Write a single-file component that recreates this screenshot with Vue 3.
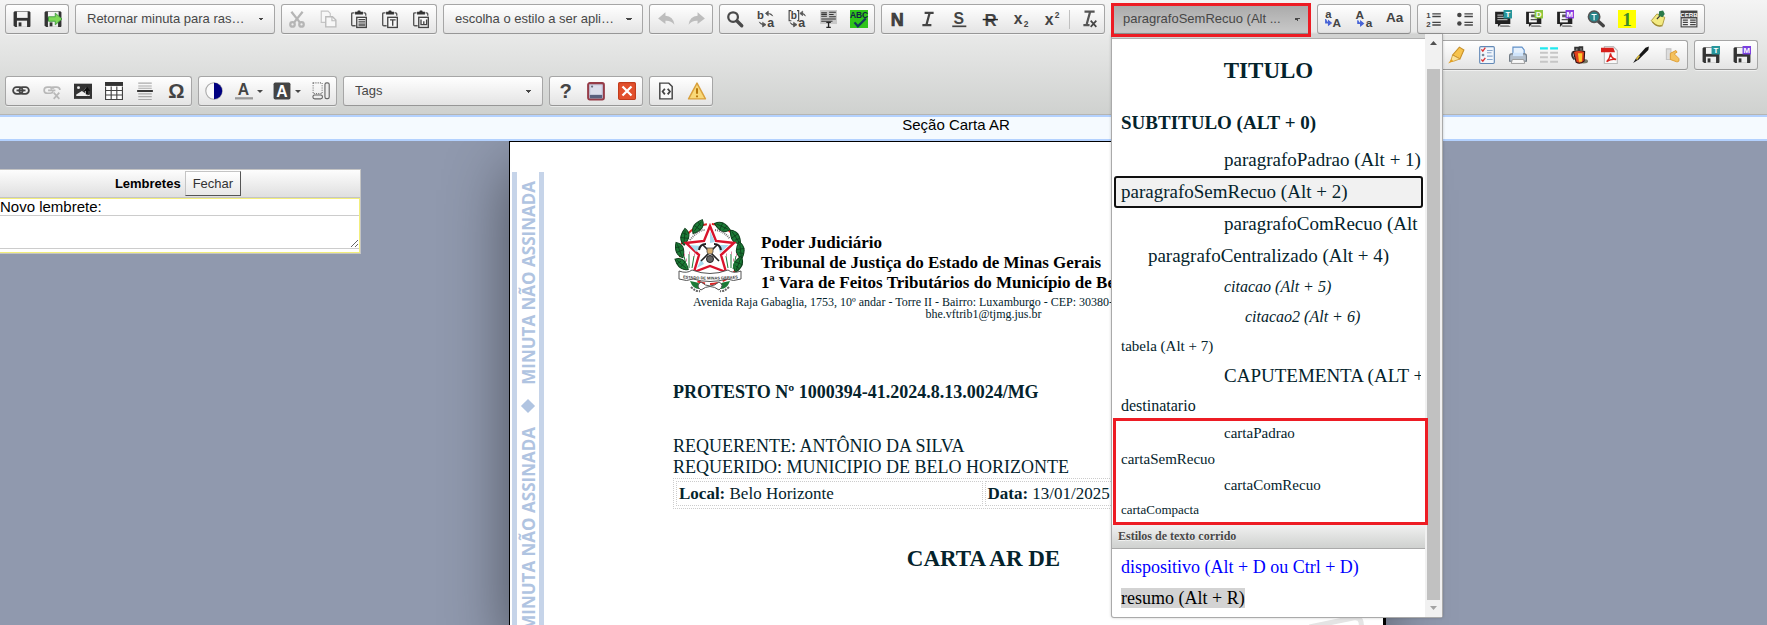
<script setup>
import { ref } from 'vue'

const dark = '#444'
const txt = (s, x, y, size, extra = '') =>
  `<text x="${x}" y="${y}" font-size="${size}" font-family="Liberation Sans, sans-serif" font-weight="bold" fill="${dark}" ${extra}>${s}</text>`
const disk = `<path d="M1.5 1h13l1 1v12.500l-.5.500h-13L.5 14V2z" fill="#333"/><rect x="3.500" y="1.500" width="9.500" height="5.500" fill="#f4f4f4"/><rect x="3.500" y="9.500" width="9" height="5.500" fill="#eee"/><rect x="5" y="11" width="2.500" height="3.500" fill="#333"/>`
const clip = `<path d="M4 2.500H2.500q-1 0-1 1V13q0 1 1 1H5M12 2.500h1q1 0 1 1V5" fill="none" stroke="#555" stroke-width="1.200"/><path d="M4.500 1.500h2L7 .5h2l.5 1h2V4h-7z" fill="#333"/><rect x="6" y="6.500" width="8.500" height="9" fill="#f7f7f7" stroke="#444" stroke-width="1.200"/>`
const tag = (l, c) =>
  `<rect x="8.500" y="0" width="7.500" height="7.500" fill="${c}"/><text x="12.300" y="6.300" text-anchor="middle" font-size="7" font-weight="bold" font-family="Liberation Sans, sans-serif" fill="#fff">${l}</text>`
const bubble = `<path d="M1 1.500h13.500v11H6L3.500 15v-2.500H1z" fill="#222"/><path d="M4 13.500h9l2 1.500H6z" fill="#888"/>`
const page = `<path d="M3.500 2.500h7v8.500h-7z" fill="#f5f5f5"/><path d="M6 4.500h2.500v1.500H6zM5 8.500h6" fill="#555" stroke="#555"/>`

const icons = {
  save: disk,
  saveExit: disk + `<path d="M4 6h6V2.800l6 5.200-6 5.200V10H4z" fill="#7ed957" stroke="#3d9a3d" stroke-width=".8"/>`,
  cut: `<g fill="none" stroke="#b5b5b5" stroke-width="2"><path d="M3 1.500l7.500 9.500M13 1.500L5.500 11"/><circle cx="4" cy="12.800" r="2"/><circle cx="12" cy="12.800" r="2"/></g>`,
  copy: `<path d="M2 1h6l2 2v8H2z" fill="#f7f7f7" stroke="#c4c4c4"/><path d="M6 6h6l3 3v6H6z" fill="#f7f7f7" stroke="#bbb" stroke-width="1.200"/><path d="M11.500 6v3.500H15" fill="none" stroke="#bbb"/>`,
  paste: clip + `<path d="M7.500 8.500h6M7.500 10.500h6M7.500 12.500h6M7.500 14h6" stroke="#444"/>`,
  pasteText: clip + `<path d="M8 8.800h5M10.400 8.500V14" stroke="#444" stroke-width="1.200"/>`,
  pasteWord: clip + `<path d="M8 8.500v4.500h5V8.500M10.500 10v3" stroke="#444" stroke-width="1.200" fill="none"/>`,
  undo: `<path d="M7.500 2v3.200q7 .3 8 8-3-4-8-3.700v3L1 7.500z" fill="#bdbdbd"/>`,
  redo: `<path d="M8.500 2v3.200q-7 .3-8 8 3-4 8-3.700v3L15 7.500z" fill="#bdbdbd"/>`,
  find: `<circle cx="6.300" cy="6.300" r="4.300" fill="none" stroke="#4a4a4a" stroke-width="2"/><path d="M9.800 9.800L14 14" stroke="#4a4a4a" stroke-width="3" stroke-linecap="round"/>`,
  replace: txt('b', 0, 8, 10) + txt('a', 9, 15, 11) + `<path d="M14 5.500q-.5-2.500-4-2.500M10 1v4L7.500 3zM2 10.500q.5 2.500 4 2.500M5 11v4l3-2z" fill="#555" stroke="#555" stroke-width=".7"/>`,
  replaceAll: txt('b', 2.500, 8, 9) + txt('a', 9, 15, 11) + `<path d="M3 .5H1v9h2M8 .5h1.500v9H8" fill="none" stroke="#444"/><path d="M15.500 5.500q-.5-2.500-3-2.500M13 1v4l-2.500-2zM2 11q.5 2.500 4 2.500M5 11v4l3-2z" fill="#555" stroke="#555" stroke-width=".7"/>`,
  selectAll: `<rect x="1" y="0" width="15" height="12.500" fill="#c9c9c9"/><path d="M2 2.500h5M2 5.500h5M2 4h5M9 2h6M9 4h4M9 6h6M2 8h13M2 10h10" stroke="#333"/><path d="M6.500 11h4M8.500 11v4.500M6.500 15.500h4" stroke="#222" stroke-width="1.200"/>`,
  spell: `<rect width="16" height="16" fill="#2fc41a"/><text x="8" y="7.500" text-anchor="middle" font-size="7.500" font-weight="bold" font-family="Liberation Sans, sans-serif" fill="#124">ABC</text><path d="M4 11l3 3.500L14 7.500" fill="none" stroke="#133a5c" stroke-width="2"/>`,
  bold: txt('N', 2.500, 14, 16, 'stroke="#333" stroke-width=".6"'),
  italic: `<path d="M5 2.500h8M3 13.500h8M9.500 2.500l-3 11" stroke="#444" stroke-width="2"/>`,
  underline: txt('S', 3, 12.500, 14) + `<path d="M2 14.500h12.500" stroke="#444" stroke-width="1.500"/>`,
  strike: txt('R', 3, 14, 15) + `<path d="M1.500 8.500h13.500" stroke="#222" stroke-width="1.300"/>`,
  sub: txt('x', 1.500, 12, 14) + txt('2', 10.500, 15, 7.500),
  sup: txt('x', 1.500, 13, 14) + txt('2', 10.500, 7, 7.500),
  clearFmt: `<path d="M4 1.500h9M3 13.500h5.500M9 1.500l-3 11" stroke="#555" stroke-width="2"/><path d="M9.500 9.500l5 5.500M14.500 9.500l-5 5.500" stroke="#444" stroke-width="1.500"/>`,
  upper: txt('a', 1, 7, 10) + txt('A', 7.500, 15, 10.500) + `<path d="M1.500 8v3.500H4M4 9.500v4L6.500 11.500z" fill="#4763d6" stroke="#4763d6"/>`,
  lower: txt('A', .5, 8, 10.500) + txt('a', 9.500, 15, 10.500) + `<path d="M2.500 9v3H5M5 10v4l2.500-2z" fill="#4763d6" stroke="#4763d6"/>`,
  caps: txt('Aa', 0, 11, 12),
  ol: txt('1', 1, 7, 7) + txt('2', 1, 15, 7) + `<path d="M6.500 3.500H14M6.500 5.800H14M6.500 11H14M6.500 13.300H14" stroke="#444" stroke-width="1.200"/>`,
  ul: `<circle cx="3" cy="4.500" r="2" fill="#444"/><circle cx="3" cy="12" r="2" fill="#444"/><path d="M7.500 3.500H15M7.500 5.800H15M7.500 11H15M7.500 13.300H15" stroke="#444" stroke-width="1.200"/>`,
  noteT: bubble + `<path d="M3 4.500h5M3 6.500h6M3 8.500h9" stroke="#aaa"/>` + tag('T', '#28969b'),
  noteD: bubble + page + tag('D', '#8cc63f'),
  noteM: bubble + page + tag('M', '#8a3fe0'),
  findT: `<path d="M10 10l4.500 4" stroke="#444" stroke-width="3" stroke-linecap="round"/><circle cx="6.300" cy="6" r="5" fill="#28868c" stroke="#555" stroke-width="1.500"/><path d="M4 4h4.600M6.300 4v5" stroke="#fff"/>`,
  one: `<rect width="16" height="16" fill="#ffff00"/><text x="8" y="14" text-anchor="middle" font-size="17" font-weight="bold" font-family="Liberation Serif, serif" fill="#3c8a28">1</text>`,
  pin: `<path d="M2 9.500L7 3.500l7 3-2 7q-5 2-10-4z" fill="#f3ea82" stroke="#a8963a" stroke-width=".8"/><path d="M3 10.500q4 5 9 3.500" fill="none" stroke="#a08c30"/><path d="M9 1l3.500-.5 1.500 3-2 3-3.500-1.500z" fill="#2a7a4a"/><path d="M9.500 5.500L7 8" stroke="#333"/>`,
  news: `<rect x=".5" y=".5" width="15" height="15" fill="#444"/><text x="8" y="6" text-anchor="middle" font-size="5.500" font-weight="bold" font-family="Liberation Sans, sans-serif" fill="#fff">CERB</text><path d="M1.500 7.500h13v7h-13z" fill="#eee"/><path d="M2.500 9h4.500M9 9h5M2.500 11h4.500M9 11h5M2.500 13h4.500M9 13h5" stroke="#444"/>`,
  marker: `<path d="M5 8L11 1l4 2.500-3.500 8z" fill="#f7c34d" stroke="#c8912a"/><path d="M5 8l6.500 3.500L6 13.500 3 14z" fill="#fbe29a" stroke="#c8912a" stroke-width=".7"/><path d="M1 15.500l3-4 1.500 2z" fill="#e4a020"/>`,
  list: `<rect x="1.500" y=".5" width="13" height="15" rx="1" fill="#f1f6fc" stroke="#6288b5"/><path d="M3 3l1.300 1.500L6.500 1.500M3 12l1.300 1.500 2.200-3" fill="none" stroke="#d33" stroke-width="1.200"/><circle cx="4.500" cy="8" r="1.200" fill="#789"/><path d="M8 4h5M8 6h4M8 9h5M8 12h5" stroke="#8aa7cc"/>`,
  print: `<path d="M3.500 1h8l2 2.500V9h-10z" fill="#e6f1fd" stroke="#5e8fc8"/><path d="M2 7h12q1.500 0 1.500 2v4.500H.5V9Q.5 7 2 7z" fill="#b3bfcc" stroke="#727c86"/><path d="M3.500 6h9v3h-9z" fill="#cfe4fb"/><path d="M3 12h10l1 3.500H2z" fill="#f8f8f8" stroke="#999" stroke-width=".8"/>`,
  columns: `<path d="M0 2h7M9 2h7" stroke="#20e8ee" stroke-width="2"/><path d="M0 6h7M0 10h7M0 14h7M9 6h7M9 10h7M9 14h7" stroke="#c6c6c6" stroke-width="1.600"/>`,
  backpack: `<ellipse cx="12" cy="13.500" rx="4" ry="2" fill="#776"/><path d="M3 5q5-2 10 0l-.5 8.500q-3.500 3-7 1z" fill="#e0401c" stroke="#311"/><path d="M7 6.500h4l-.5 7.500H8z" fill="#ffc72e"/><path d="M2.500 5q-2 4 1.500 7M4.500 4V1.500h3V4M8.500 4V1h2.500v3" stroke="#333" stroke-width="1.500" fill="#888"/>`,
  pdf: `<path d="M3 .5h8l3.500 3.500v11.500H3z" fill="#fafafa" stroke="#bbb"/><path d="M0 1.500h11l1.500 4H0z" fill="#d8201c"/><path d="M5 14q3-3 3.500-7.500Q9 11 13.500 12 9 11 5 14z" fill="none" stroke="#d8201c" stroke-width="1.200"/>`,
  pen: `<path d="M1 15l2.500-4L12 1.500 15 .5l-.5 3L6 12z" fill="#161616"/><path d="M4 12L6.500 8.500" stroke="#d8b83c" stroke-width="1.500"/>`,
  hand: `<path d="M3 2.500h4V12H3z" fill="#ddd" stroke="#c2c2c2"/><path d="M6.500 6.500l5-2.500 1 1.500-2.500 1.500 4 4q1 3.500-2 3L6.500 12z" fill="#f4c15e" stroke="#dc9a2c" stroke-width=".8"/>`,
  saveT: disk + tag('T', '#28969b'),
  saveM: disk + tag('M', '#7a3fe0'),
  link: `<g fill="none" stroke="#444" stroke-width="1.600"><rect x="1" y="4.500" width="8.500" height="6" rx="3"/><rect x="6.500" y="4.500" width="8.500" height="6" rx="3"/><path d="M4 7.500h8"/></g>`,
  unlink: `<g fill="none" stroke="#b8b8b8" stroke-width="1.500"><path d="M9 8.500q-.5 1.500-2.500 1.500h-2.500q-3 0-3-2.700T4 4.500h2.500q2.500 0 3 1.500M7 6.500q.5-2 2.500-2h2.500q3 0 3 2.500M4.500 7.500H11"/><path d="M9.500 9.500l5 5.500M14.500 9.500l-5 5.500"/></g>`,
  image: `<rect x="0" y="1.500" width="16" height="13.500" fill="#333"/><path d="M2 12.500h12V11l-2 1V8h1.500L11 4.500 8.500 8 10 8v2L7 8l-5 3z" fill="#eee"/><circle cx="4" cy="5" r="1.300" fill="#eee"/><path d="M11.500 4l3 4h-2v3h-2V8h-2z" fill="#111"/>`,
  table: `<rect x="0" y="0" width="16" height="3.500" fill="#333"/><path d="M.5 4v11.500h15V4M5.500 4v11.500M10.500 4v11.500M.5 7.500h15M.5 11.500h15" fill="#fff" stroke="#444"/>`,
  hr: `<path d="M2 1h12M2 3.500h12M2 5.500h12M2 10.500h12M2 13h12M2 15.500h12" stroke="#aaa"/><path d="M1 8h14" stroke="#222" stroke-width="1.600"/>`,
  omega: txt('Ω', 1, 14.500, 18),
  contrast: `<circle cx="8" cy="8" r="7.300" fill="#fafafa" stroke="#aaa"/><path d="M8 .7a7.300 7.300 0 010 14.600z" fill="#000080"/>`,
  color: txt('A', 2.500, 11.500, 14) + `<path d="M0 14.500h16" stroke="#999" stroke-width="2"/>`,
  bgColor: `<rect x=".5" y=".5" width="15" height="15" rx="1.500" fill="#444"/><text x="8" y="13" text-anchor="middle" font-size="14" font-weight="bold" font-family="Liberation Sans, sans-serif" fill="#fff">A</text>`,
  blocks: `<rect x="1" y=".8" width="8" height="9.500" fill="none" stroke="#777" stroke-dasharray="1 1"/><rect x="11.500" y=".8" width="3.800" height="14" rx="1.500" fill="#eee" stroke="#666"/><rect x=".8" y="11.500" width="8.500" height="3.500" rx="1.700" fill="#eee" stroke="#666"/>`,
  help: txt('?', 3, 14.500, 18),
  frame: `<rect x="1" y="1" width="14" height="14.500" rx="1.500" fill="#c3c8dc" stroke="#963c48" stroke-width="1.800"/><path d="M3 3h10v8H3z" fill="#dcdeec"/><path d="M2.500 11.500h11v3h-11z" fill="#59607e"/><circle cx="4.500" cy="4" r="1" fill="#6a6f80"/>`,
  close: `<rect x=".5" y=".5" width="15" height="15" rx="1" fill="#e2502c" stroke="#c23c1c"/><path d="M4 4l8 8M12 4l-8 8" stroke="#fff" stroke-width="2"/>`,
  source: `<path d="M2.500 1h8l3 3v11h-11z" fill="#fafafa" stroke="#444" stroke-width="1.300"/><path d="M7 6L5 8.500 7 11M9.500 6l2 2.500-2 2.500" fill="none" stroke="#444" stroke-width="1.600"/>`,
  warn: `<path d="M8 1l7.500 14H.5z" fill="#f9d978" stroke="#d9a03c" stroke-width="1.300" stroke-linejoin="round"/><path d="M8 5.500v5M8 12v1.500" stroke="#b8780c" stroke-width="1.800"/>`,
}

const row1 = [
  { w: 'w2', items: [['save', 'Salvar'], ['saveExit', 'Salvar e sair']] },
  { combo: 'Retornar minuta para ras…', label: 'Ação ao salvar' },
  { w: 'w5', items: [['cut', 'Recortar'], ['copy', 'Copiar'], ['paste', 'Colar'], ['pasteText', 'Colar como texto'], ['pasteWord', 'Colar do Word']] },
  { combo: 'escolha o estilo a ser apli…', label: 'Estilo da minuta' },
  { w: 'w2', items: [['undo', 'Desfazer'], ['redo', 'Refazer']] },
  { w: 'w5', items: [['find', 'Localizar'], ['replace', 'Substituir'], ['replaceAll', 'Substituir todos'], ['selectAll', 'Selecionar tudo'], ['spell', 'Verificar ortografia']] },
  { w: 'w7s', items: [['bold', 'Negrito'], ['italic', 'Itálico'], ['underline', 'Sublinhado'], ['strike', 'Riscado'], ['sub', 'Subscrito'], ['sup', 'Sobrescrito'], ['clearFmt', 'Remover formatação', true]] },
  { styles: true },
  { w: 'w3', items: [['upper', 'Maiúsculas'], ['lower', 'Minúsculas'], ['caps', 'Capitalizar']] },
  { w: 'w2', items: [['ol', 'Lista numerada'], ['ul', 'Lista com marcadores']] },
  { w: 'w7', items: [['noteT', 'Inserir texto'], ['noteD', 'Inserir documento'], ['noteM', 'Inserir modelo'], ['findT', 'Pesquisar texto'], ['one', 'Destaque'], ['pin', 'Lembrete'], ['news', 'Publicação']] },
]
const row2 = [
  { w: 'w8', items: [['marker', 'Marcador'], ['list', 'Lista de tarefas'], ['print', 'Imprimir'], ['columns', 'Colunas'], ['backpack', 'Mochila'], ['pdf', 'PDF'], ['pen', 'Assinar'], ['hand', 'Enviar']] },
  { w: 'w2', items: [['saveT', 'Salvar texto'], ['saveM', 'Salvar modelo']] },
]
const row3 = [
  { w: 'w6', items: [['link', 'Link'], ['unlink', 'Remover link'], ['image', 'Imagem'], ['table', 'Tabela'], ['hr', 'Linha horizontal'], ['omega', 'Caractere especial']] },
  { w: 'w4', items: [['contrast', 'Contraste'], ['color', 'Cor do texto', false, true], ['bgColor', 'Cor de fundo', false, true], ['blocks', 'Mostrar blocos']] },
  { combo: 'Tags', label: 'Tags' },
  { w: 'w3', items: [['help', 'Ajuda'], ['frame', 'Moldura'], ['close', 'Fechar editor']] },
  { w: 'w2', items: [['source', 'Código-fonte'], ['warn', 'Avisos']] },
]
const rows = [row1, row2, row3]

const selected = ref('paragrafoSemRecuo (Alt + 2)')
const styles = [
  ['TITULO', 'titulo'],
  ['SUBTITULO (ALT + 0)', 'subtitulo'],
  ['paragrafoPadrao (Alt + 1)', 'par indent'],
  ['paragrafoSemRecuo (Alt + 2)', 'par'],
  ['paragrafoComRecuo (Alt + 3)', 'par indent'],
  ['paragrafoCentralizado (Alt + 4)', 'par center'],
  ['citacao (Alt + 5)', 'cit indent'],
  ['citacao2 (Alt + 6)', 'cit indent2'],
  ['tabela (Alt + 7)', 'tab'],
  ['CAPUTEMENTA (ALT + E)', 'par indent'],
  ['destinatario', 'dest'],
]
const letters = [
  ['cartaPadrao', 'carta indent'],
  ['cartaSemRecuo', 'carta'],
  ['cartaComRecuo', 'carta indent'],
  ['cartaCompacta', 'compact'],
]
const leaves = [-145, -114, -172, 160, -35, -66, -8, 20].map((a) => {
  const r = (a * Math.PI) / 180
  return { x: Math.round(37 + 30 * Math.cos(r)), y: Math.round(35 + 30 * Math.sin(r)), a: a + (Math.abs(a) > 90 ? 75 : 105) }
})
const note = ref('')
</script>

<template>
  <div class="editor">
    <header class="toolbar">
      <div v-for="(row, i) in rows" :key="i" class="row" :class="{ end: i === 1 }">
        <template v-for="(g, j) in row" :key="j">
          <select v-if="g.combo" class="combo" :aria-label="g.label">
            <option>{{ g.combo }}</option>
          </select>
          <div v-else-if="g.styles" class="styles">
            <button class="combo open" type="button" aria-haspopup="listbox" aria-expanded="true">
              paragrafoSemRecuo (Alt ...
            </button>
            <div class="panel">
              <div class="list">
                <div class="strip"></div>
                <ul role="listbox" aria-label="Estilos de parágrafo">
                  <li
                    v-for="s in styles"
                    :key="s[0]"
                    role="option"
                    :aria-selected="s[0] === selected"
                    :class="[s[1], { on: s[0] === selected }]"
                    @click="selected = s[0]"
                  >{{ s[0] }}</li>
                </ul>
                <ul class="marked" role="listbox" aria-label="Estilos de carta">
                  <li v-for="s in letters" :key="s[0]" role="option" :class="s[1]" @click="selected = s[0]">{{ s[0] }}</li>
                </ul>
                <h2>Estilos de texto corrido</h2>
                <ul class="inline" role="listbox" aria-label="Estilos de texto corrido">
                  <li role="option" class="run blue">dispositivo (Alt + D ou Ctrl + D)</li>
                  <li role="option" class="run"><mark>resumo (Alt + R)</mark></li>
                </ul>
              </div>
              <div class="scroll">
                <svg viewBox="0 0 17 17" width="17" height="17"><path d="M5 11h7L8.500 7z" fill="#505050" /></svg>
                <div class="thumb"></div>
                <svg viewBox="0 0 17 17" width="17" height="17"><path d="M5 6h7l-3.500 4z" fill="#a3a3a3" /></svg>
              </div>
            </div>
          </div>
          <div v-else class="group" :class="g.w">
            <button
              v-for="b in g.items"
              :key="b[0]"
              type="button"
              :class="{ sep: b[2], arrow: b[3] }"
              :aria-label="b[1]"
            >
              <svg viewBox="0 0 16 16" width="18" height="18" v-html="icons[b[0]]"></svg>
            </button>
          </div>
        </template>
      </div>
    </header>

    <div class="section">Seção Carta AR</div>

    <main>
      <aside>
        <div class="head">
          <strong>Lembretes</strong>
          <button type="button">Fechar</button>
        </div>
        <div class="body">
          <label for="note">Novo lembrete:</label>
          <textarea id="note" v-model="note"></textarea>
        </div>
      </aside>

      <article>
        <div class="side" aria-hidden="true">
          <template v-for="n in 2" :key="n">
            <span>MINUTA NÃO ASSINADA</span>
            <i></i>
          </template>
        </div>
        <div class="doc">
          <div class="letterhead">
            <svg class="crest" viewBox="0 0 74 74" width="74" height="74">
              <circle cx="37" cy="35" r="30" fill="none" stroke="#d22" stroke-width="2" stroke-dasharray="8 5" />
              <g v-for="l in leaves" :key="l.a" :transform="`translate(${l.x} ${l.y}) rotate(${l.a})`">
                <path d="M-8 2Q-4-7 8-3 5 7-8 2z" fill="#1b7a36" stroke="#0d3f1b" />
                <path d="M-6 1L6-2M-2-4L0 4M3-4l0 5" stroke="#0d3f1b" stroke-width=".8" fill="none" />
              </g>
              <circle cx="37" cy="36" r="22" fill="#fff" />
              <path d="M17 21q8-10 15-10M42 11q9 1 15 9" fill="none" stroke="#777" stroke-width="2" stroke-dasharray="1 1" />
              <path d="M37 7l6 15 18 2-13 12 5 17-16-6-16 6 5-17L13 24l18-2z" fill="#fff" stroke="#d9142c" stroke-width="2.400" />
              <path d="M37 12v12l5-1zM17 26l12 1-6 6zM56 26l-9 8-2-8zM24 49l4-9 3 5z" fill="#a9dcf0" />
              <path d="M28 42L44 26M46 42L30 26" stroke="#222" stroke-width="1.600" />
              <path d="M26 31q1-6 7-6M48 31q-1-6-7-6" fill="none" stroke="#222" stroke-width="2" />
              <path d="M34 29h6v4l-1 2h-4l-1-2z" fill="#d8b070" stroke="#444" stroke-width=".8" />
              <circle cx="37" cy="40" r="3.500" fill="#666" stroke="#222" />
              <path d="M14 50l-3-13M16 49l0-14M19 49l2-12M60 50l3-13M58 49l0-14M55 49l-2-12" stroke="#1b7a36" fill="none" />
              <path d="M11 36h1M16 34h1M21 36h1M13 41h1M63 36h1M58 34h1M53 36h1M60 41h1" stroke="#e08aa8" stroke-width="3" />
              <path d="M6 52q8 3 13-1 18 7 36 0 5 4 13 1l0 8q-8 3-14 0-17 5-34 0-6 3-14 0z" fill="#fff" stroke="#555" />
              <path d="M17 62q8 1 12 4l-3 4q-6 0-9-8zM57 62q-8 1-12 4l3 4q6 0 9-8z" fill="#1b7a36" />
              <path d="M28 63q9 8 18 0 6 3 0 8-9-7-18 0-6-4 0-8z" fill="#fff" stroke="#555" />
              <path d="M18 68q5 5 9 4M56 68q-5 5-9 4" fill="none" stroke="#666" stroke-width="2" stroke-dasharray="2 1" />
              <path id="ribbon" d="M7 59q30 3 61 0" fill="none" />
              <text font-family="Liberation Sans, sans-serif" font-size="4" font-weight="bold" fill="#333">
                <textPath href="#ribbon" startOffset="50%" text-anchor="middle">ESTADO DE MINAS GERAES</textPath>
              </text>
            </svg>
            <p>
              Poder Judiciário<br />
              Tribunal de Justiça do Estado de Minas Gerais<br />
              1ª Vara de Feitos Tributários do Município de Belo Horizonte
            </p>
          </div>
          <address>
            <p class="street">Avenida Raja Gabaglia, 1753, 10º andar - Torre II - Bairro: Luxamburgo - CEP: 30380-900</p>
            <p class="mail">bhe.vftrib1@tjmg.jus.br</p>
          </address>
          <h1>PROTESTO Nº 1000394-41.2024.8.13.0024/MG</h1>
          <p class="parties">
            REQUERENTE: ANTÔNIO DA SILVA<br />
            REQUERIDO: MUNICIPIO DE BELO HORIZONTE
          </p>
          <table>
            <tbody>
              <tr>
                <td><b>Local:</b> Belo Horizonte</td>
                <td><b>Data:</b> 13/01/2025</td>
              </tr>
            </tbody>
          </table>
          <h3>CARTA AR DE</h3>
        </div>
        <svg class="stamp" viewBox="0 0 60 12" width="60" height="12">
          <path d="M0 11L44 2q7-1 8 4l1 8" fill="none" stroke="#e4e4e4" stroke-width="5" />
        </svg>
      </article>
    </main>
  </div>
</template>

<style>
body {
  margin: 0;
  overflow: hidden;
}
</style>

<style scoped>
.editor {
  display: flex;
  flex-direction: column;
  height: 100vh;
  overflow: hidden;
  font-family: 'Liberation Sans', Arial, sans-serif;
  color: #000;
}
ul,
p,
h1,
h2,
h3 {
  margin: 0;
  padding: 0;
}
button,
select,
textarea {
  font-family: inherit;
  margin: 0;
}

.toolbar {
  display: flex;
  flex-direction: column;
  gap: 6px;
  flex: none;
  padding: 4px 9px 8px 5px;
  border-bottom: 1px solid #b5b5b3;
  background: linear-gradient(#f4f4f4, #cfd1cf);
}
.row {
  display: flex;
  gap: 6px;
}
.row.end {
  justify-content: flex-end;
}
.group {
  display: flex;
  flex: none;
  box-sizing: border-box;
  height: 30px;
  border: 1px solid #a6a6a6;
  border-bottom-color: #979797;
  border-radius: 3px;
  background: linear-gradient(#fff, #e4e4e4);
  box-shadow: 0 1px 0 #fff8;
}
.w2 { width: 64px; }
.w3 { width: 94px; }
.w4 { width: 139px; }
.w5 { width: 156px; }
.w6 { width: 187px; }
.w7 { width: 218px; }
.w7s { width: 224px; }
.w8 { width: 248px; }
.group button {
  display: flex;
  flex: 1;
  align-items: center;
  justify-content: center;
  min-width: 0;
  padding: 0;
  border: 0;
  background: none;
}
.group svg {
  flex: none;
  overflow: visible;
}
.group .sep {
  margin-left: 2px;
  position: relative;
  padding-left: 4px;
}
.group .sep::before {
  content: '';
  position: absolute;
  left: 0;
  top: 5px;
  bottom: 4px;
  border-left: 1px solid #c0c0c0;
}
.group .arrow {
  flex: 0 0 38px;
  gap: 4px;
}
.group .arrow::after {
  content: '';
  border: 3px solid transparent;
  border-top-color: #474747;
  border-bottom: 0;
}
.combo {
  appearance: none;
  box-sizing: border-box;
  width: 200px;
  height: 30px;
  flex: none;
  padding: 0 24px 2px 11px;
  border: 1px solid #a6a6a6;
  border-bottom-color: #979797;
  border-radius: 3px;
  font-size: 13px;
  text-align: left;
  white-space: nowrap;
  color: #474747;
  background:
    linear-gradient(135deg, #474747 50%, transparent 50%) 185px 13px / 3px 3px no-repeat,
    linear-gradient(225deg, #474747 50%, transparent 50%) 182px 13px / 3px 3px no-repeat,
    linear-gradient(#fff, #e4e4e4);
}
.styles {
  position: relative;
  width: 200px;
  flex: none;
}
.styles::after {
  content: '';
  position: absolute;
  inset: -1px 0 -3px;
  border: 3px solid #ed1c24;
  z-index: 3;
}
.combo.open {
  display: block;
  background:
    linear-gradient(135deg, #474747 50%, transparent 50%) 185px 13px / 3px 3px no-repeat,
    linear-gradient(225deg, #474747 50%, transparent 50%) 182px 13px / 3px 3px no-repeat,
    linear-gradient(#aaa, #c9c9c9);
}

.panel {
  position: absolute;
  z-index: 2;
  top: 30px;
  left: 0;
  display: flex;
  box-sizing: border-box;
  width: 332px;
  border: 1px solid #aaa;
  border-top: 0;
  border-radius: 0 0 3px 3px;
  background: #fff;
  box-shadow: 0 0 3px #0003;
  font-family: 'Liberation Serif', 'Times New Roman', serif;
  color: #04232c;
}
.list {
  flex: 1;
  min-width: 0;
}
.strip {
  height: 4px;
  border-bottom: 1px solid #b0b0b0;
  background: #d2d3d2;
}
.list ul {
  list-style: none;
}
.list li {
  box-sizing: border-box;
  margin: 0 2px;
  padding: 0 5px;
  border: solid transparent;
  border-width: 0 2px;
  overflow: hidden;
  white-space: nowrap;
}
.list .titulo { font-size: 23px; font-weight: bold; line-height: 63px; text-align: center; }
.list .subtitulo { font-size: 19px; font-weight: bold; line-height: 42px; }
.list .par { font-size: 19px; line-height: 32px; }
.list .cit { font-size: 16px; line-height: 30px; font-style: italic; }
.list .tab { font-size: 15px; line-height: 28px; }
.list .dest { font-size: 16px; line-height: 28px; }
.list .carta { font-size: 15px; line-height: 26px; }
.list .compact { font-size: 13px; line-height: 24px; }
.list .run { font-size: 18px; line-height: 31px; }
.list .center { text-align: center; }
.list .indent { padding-left: 108px; }
.list .indent2 { padding-left: 129px; }
.list .blue { color: #00f; }
.list .on {
  border: 2px solid #101010;
  border-radius: 3px;
  line-height: 28px;
  background: #f1f1f1;
}
.marked {
  position: relative;
  padding-bottom: 2px;
}
.marked::after {
  content: '';
  position: absolute;
  inset: -2px -3px -1px 1px;
  border: 3px solid #ed1c24;
}
.list h2 {
  padding-left: 6px;
  border-bottom: 1px solid #aaa;
  font-size: 12px;
  line-height: 24px;
  color: #474747;
  text-shadow: 0 1px 0 #fffb;
  background: linear-gradient(#f2f2f2, #cfd1cf);
}
.inline {
  padding: 3px 0;
}
mark {
  color: #000;
  background: #d3d3d3;
}
.scroll {
  display: flex;
  flex-direction: column;
  align-items: center;
  width: 17px;
  flex: none;
  background: #f1f1f1;
}
.scroll svg {
  display: block;
}
.thumb {
  flex: 1;
  width: 13px;
  margin-top: 18px;
  background: #c1c1c1;
}

.section {
  flex: none;
  padding: 0 0 6px 145px;
  border: solid #b3d1ff;
  border-width: 2px 0;
  font-size: 15px;
  line-height: 16px;
  text-align: center;
  background: #f5faff;
}

main {
  display: flex;
  align-items: flex-start;
  flex: 1;
  gap: 148px;
  min-height: 0;
  overflow: hidden;
  background: #9099ae;
}
aside {
  flex: none;
  box-sizing: border-box;
  width: 361px;
  margin-top: 28px;
  border: 1px solid #c4c4c4;
  border-left: 0;
  background: #fff;
}
.head {
  display: flex;
  align-items: center;
  justify-content: center;
  gap: 4px;
  padding: 1px 4px 1px 0;
  border-bottom: 1px solid #c4c4c4;
  font-size: 13px;
  background: linear-gradient(#fdfdfd, #dfdfdf);
}
.head button {
  height: 25px;
  padding: 0 7px;
  border: 1px solid;
  border-color: #c4c4c4 #555 #555 #c4c4c4;
  font-size: 13px;
  color: #333;
  background: linear-gradient(#fff, #e8e8e8);
}
.body {
  border: solid #f2ee7c;
  border-width: 1px 1px 1px 0;
  padding-bottom: 3px;
}
.body label {
  display: block;
  font-size: 15px;
  line-height: 16px;
}
.body textarea {
  display: block;
  box-sizing: border-box;
  width: 100%;
  height: 34px;
  padding: 0;
  border: solid #ccc;
  border-width: 1px 0;
  outline: 0;
}

article {
  position: relative;
  display: flex;
  flex: none;
  align-self: stretch;
  box-sizing: border-box;
  width: 877px;
  overflow: hidden;
  border: solid #000;
  border-width: 1px 3px 0 1px;
  background: #fff;
  box-shadow: 0 28px 60px #0007;
  color: #04232c;
  font-family: 'Liberation Serif', 'Times New Roman', serif;
}
.side {
  display: flex;
  flex-direction: column;
  align-items: center;
  gap: 16px;
  flex: none;
  box-sizing: border-box;
  width: 32px;
  margin: 30px 0 0 2px;
  padding-top: 9px;
  border: solid #c6d4e9;
  border-width: 0 5px;
  background: #fff;
  font: bold 17px 'Open Sans', sans-serif;
  color: #b0c4e1;
}
.side span {
  writing-mode: vertical-rl;
  transform: rotate(180deg);
  white-space: nowrap;
}
.side i {
  width: 10px;
  height: 10px;
  flex: none;
  transform: rotate(45deg);
  background: #b0c4e1;
}
.doc {
  width: 621px;
  margin: 77px 0 0 129px;
  flex: none;
}
.letterhead {
  display: flex;
  gap: 14px;
}
.crest {
  flex: none;
  overflow: visible;
}
.letterhead p {
  padding-top: 14px;
  font-size: 17px;
  font-weight: bold;
  line-height: 20px;
  white-space: nowrap;
  color: #000;
}
address {
  padding-top: 3px;
  font-style: normal;
  font-size: 12px;
  line-height: 12px;
}
.street {
  padding-left: 20px;
  white-space: nowrap;
}
.mail {
  text-align: center;
}
h1 {
  margin-top: 62px;
  font-size: 18px;
  line-height: 20px;
}
.parties {
  margin-top: 34px;
  font-size: 18px;
  line-height: 21px;
}
table {
  width: 100%;
  table-layout: fixed;
  border: 1px dotted #ccc;
  border-spacing: 2px;
  font-size: 17px;
  line-height: 21px;
}
td {
  padding: 1px 2px;
  border: 1px dotted #ccc;
}
h3 {
  margin-top: 36px;
  font-size: 23px;
  line-height: 27px;
  text-align: center;
}
.stamp {
  position: absolute;
  right: 14px;
  bottom: -3px;
}
</style>
